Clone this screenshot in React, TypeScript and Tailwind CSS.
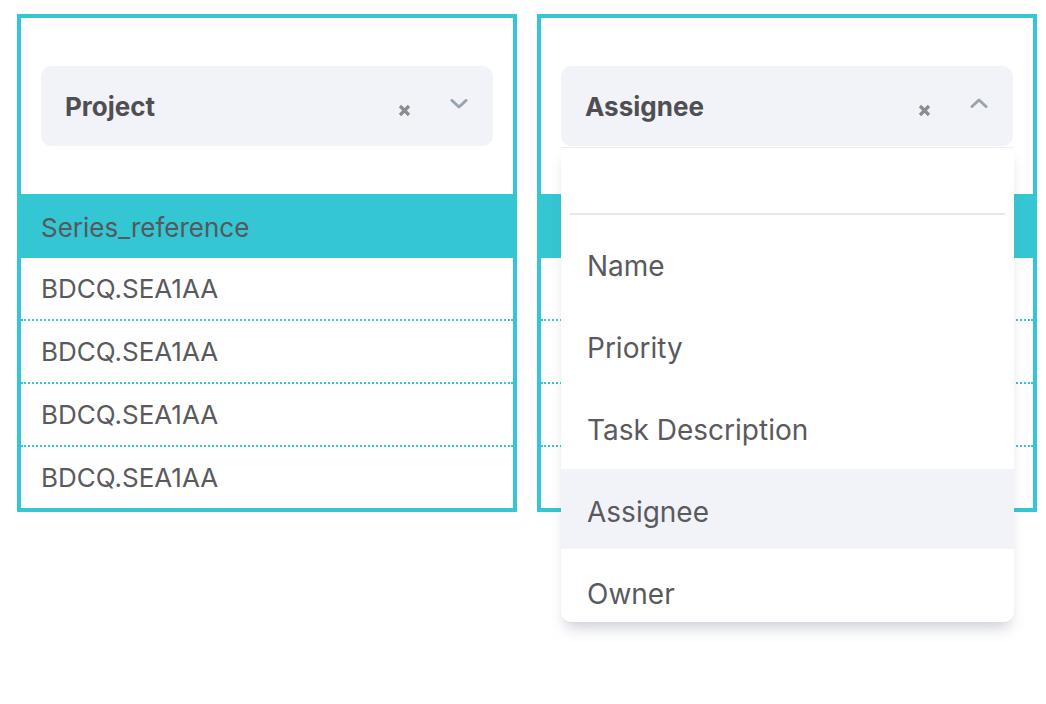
import React from "react";

const ROWS = ["BDCQ.SEA1AA", "BDCQ.SEA1AA", "BDCQ.SEA1AA", "BDCQ.SEA1AA"];
const OPTIONS = ["Name", "Priority", "Task Description", "Assignee", "Owner"];

function ClearIcon() {
  return (
    <svg width="13" height="13" viewBox="0 0 13 13" className="text-[#8c8c8f]">
      <path d="M2 2 L11 11 M11 2 L2 11" stroke="currentColor" strokeWidth="3.2" strokeLinecap="butt" />
    </svg>
  );
}

function Chevron({ up }: { up?: boolean }) {
  return (
    <svg width="18" height="10" viewBox="0 0 18 10" className="text-[#9aa3b0]">
      <path
        d={up ? "M2 8.5 L9 2 L16 8.5" : "M2 1.5 L9 8 L16 1.5"}
        fill="none"
        stroke="currentColor"
        strokeWidth="3"
        strokeLinecap="round"
        strokeLinejoin="round"
      />
    </svg>
  );
}

function SelectBox({ label, open }: { label: string; open?: boolean }) {
  return (
    <div className="flex h-[80px] items-center rounded-[10px] bg-[#f2f3f8] pl-6 pr-[25px]">
      <span className="flex-1 text-[26px] font-bold text-[#4f4f53]">{label}</span>
      <span className="mt-[8px] mr-[39px]">
        <ClearIcon />
      </span>
      <span className={open ? "-mt-[6px]" : "-mt-[5px]"}>
        <Chevron up={open} />
      </span>
    </div>
  );
}

function Panel({ label, open }: { label: string; open?: boolean }) {
  return (
    <div className="relative w-[500px] border-4 border-[#34c6d3] bg-white">
      <div className="px-5 pt-[48px] pb-[48px]">
        <SelectBox label={label} open={open} />
      </div>
      <div className="-mx-1 flex h-[64px] items-center border-b-2 border-dotted border-[#34c6d3] bg-[#34c6d3] px-6 pt-1 text-[26px] text-[#55585c]">
        Series_reference
      </div>
      {ROWS.map((r, i) => (
        <div
          key={i}
          className={
            "flex items-center px-5 text-[26px] text-[#5a5a5e] " +
            (i < ROWS.length - 1 ? "h-[63px] border-b-2 border-dotted border-[#34c6d3]" : "h-[61px]")
          }
        >
          {r}
        </div>
      ))}
      {open && (
        <div className="absolute left-5 top-[129px] z-10 h-[475px] w-[453px] overflow-hidden rounded-b-[10px] border-t border-[#eceef3] bg-white shadow-[0_10px_14px_-4px_rgba(120,125,150,0.35)]">
          <div className="h-[65px]" />
          <div className="mx-[9px] h-[2px] bg-[#e6e8f0]" />
          <div className="flex flex-col gap-[2px] pt-[8px]">
            {OPTIONS.map((o) => (
              <div
                key={o}
                className={
                  "flex h-[80px] shrink-0 items-center px-[26px] pt-[6px] text-[28px] text-[#5a5a5e] " +
                  (o === "Assignee" ? "bg-[#f2f3f8]" : "")
                }
              >
                {o}
              </div>
            ))}
          </div>
        </div>
      )}
    </div>
  );
}

export default function App() {
  return (
    <div
      className="flex h-[704px] w-[1046px] items-start gap-5 bg-white pl-[17px] pt-[14px]"
      style={{ fontFamily: "Inter, 'Noto Sans', sans-serif" }}
    >
      <Panel label="Project" />
      <Panel label="Assignee" open />
    </div>
  );
}
